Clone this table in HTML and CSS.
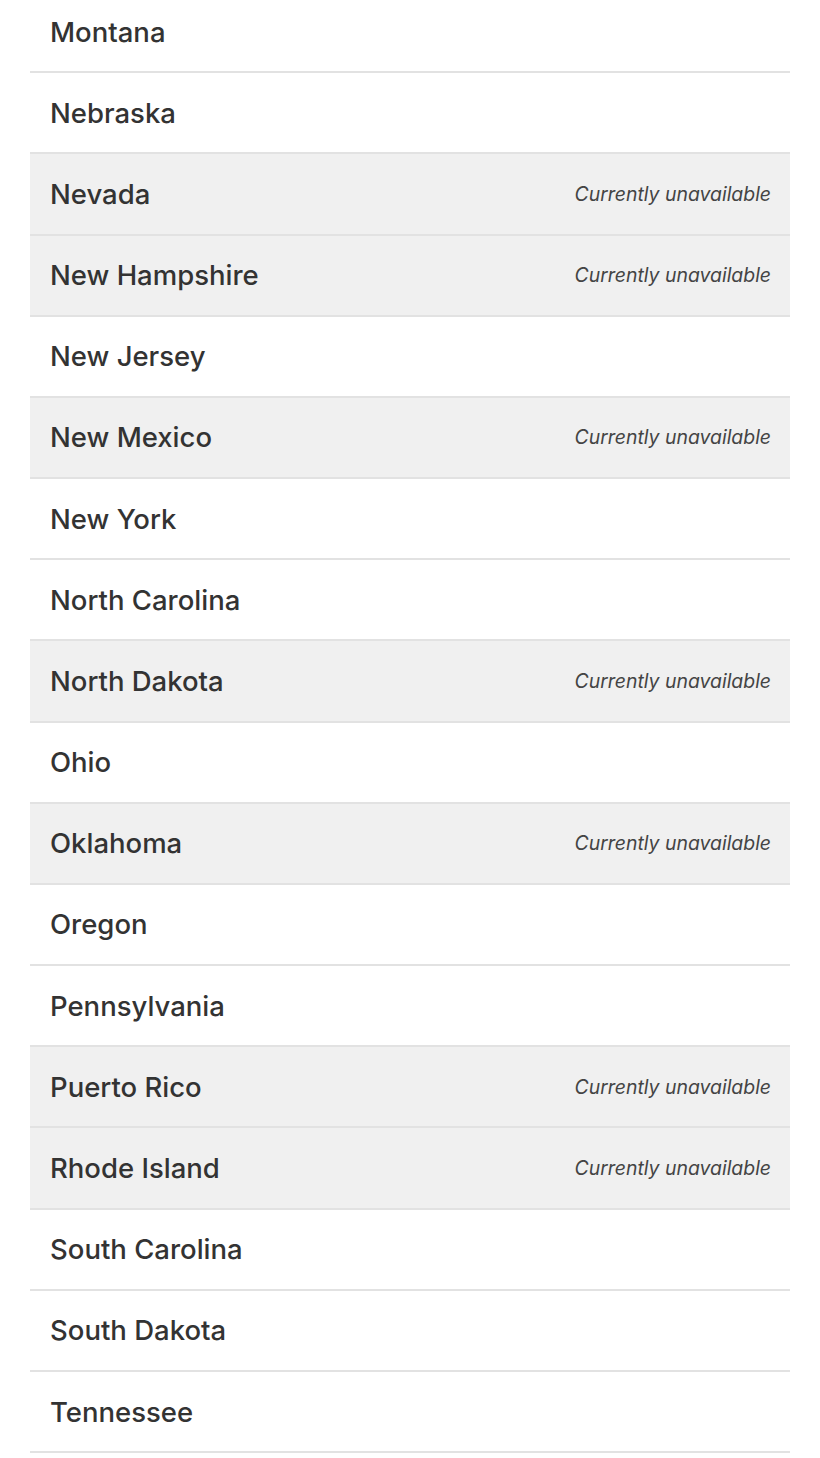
FILE: index.html
```html
<!DOCTYPE html>
<html>
<head>
<meta charset="utf-8">
<link rel="stylesheet" href="styles.css">
</head>
<body>
<ul class="list">
  <li class="row"><span class="name">Montana</span></li>
  <li class="row"><span class="name">Nebraska</span></li>
  <li class="row off"><span class="name">Nevada</span><span class="note">Currently unavailable</span></li>
  <li class="row off"><span class="name">New Hampshire</span><span class="note">Currently unavailable</span></li>
  <li class="row"><span class="name">New Jersey</span></li>
  <li class="row off"><span class="name">New Mexico</span><span class="note">Currently unavailable</span></li>
  <li class="row"><span class="name">New York</span></li>
  <li class="row"><span class="name">North Carolina</span></li>
  <li class="row off"><span class="name">North Dakota</span><span class="note">Currently unavailable</span></li>
  <li class="row"><span class="name">Ohio</span></li>
  <li class="row off"><span class="name">Oklahoma</span><span class="note">Currently unavailable</span></li>
  <li class="row"><span class="name">Oregon</span></li>
  <li class="row"><span class="name">Pennsylvania</span></li>
  <li class="row off"><span class="name">Puerto Rico</span><span class="note">Currently unavailable</span></li>
  <li class="row off"><span class="name">Rhode Island</span><span class="note">Currently unavailable</span></li>
  <li class="row"><span class="name">South Carolina</span></li>
  <li class="row"><span class="name">South Dakota</span></li>
  <li class="row"><span class="name">Tennessee</span></li>
</ul>
</body>
</html>
```
FILE: styles.css
```css
html, body {
  margin: 0;
  padding: 0;
  background: #ffffff;
}
body {
  font-family: Inter, "Open Sans", "Liberation Sans", sans-serif;
  color: #333333;
  overflow: hidden;
}
.list {
  list-style: none;
  margin: -8px 30px 0 30px;
  padding: 0;
}
.row {
  display: flex;
  align-items: center;
  justify-content: space-between;
  height: 79.18px;
  padding: 0 19px 0 20px;
  border-bottom: 2px solid #e2e2e2;
}
.row.off {
  background: #f0f0f0;
}
.name {
  font-size: 27.5px;
  font-weight: 500;
  color: #333333;
}
.note {
  font-size: 19.4px;
  font-style: italic;
  color: #444444;
}
```
